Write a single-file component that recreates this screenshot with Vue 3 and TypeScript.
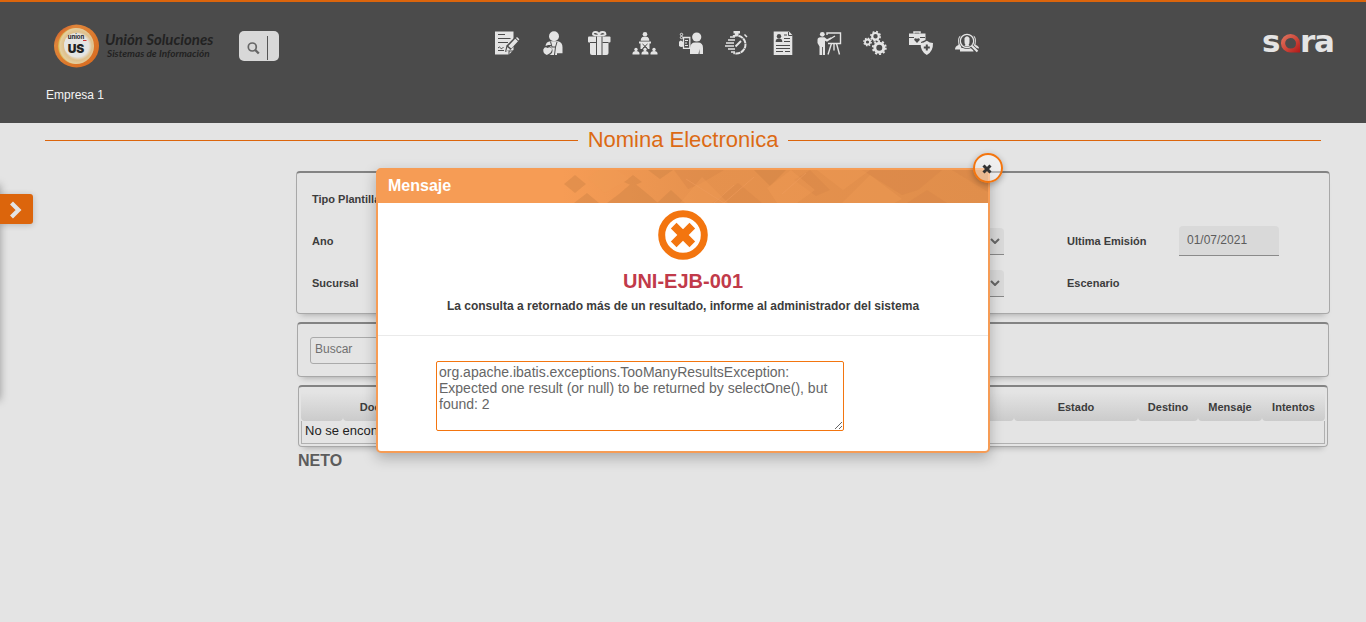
<script setup lang="ts">
import { ref } from 'vue'

interface Column {
  label: string
  width: string
}

const company = ref<string>('Empresa 1')
const issueDate = ref<string>('01/07/2021')
const search = ref<string>('')
const errorDetail = ref<string>(
  'org.apache.ibatis.exceptions.TooManyResultsException: Expected one result (or null) to be returned by selectOne(), but found: 2',
)

const columns: Column[] = [
  { label: '', width: '42px' },
  { label: 'Documento', width: '94px' },
  { label: '', width: 'auto' },
  { label: 'Estado', width: '124px' },
  { label: 'Destino', width: '60px' },
  { label: 'Mensaje', width: '64px' },
  { label: 'Intentos', width: '63px' },
]

const sideFigures: number[] = [3, 12, 21]
const watchLines: number[][] = [
  [5, 6, 10],
  [3, 9, 10],
  [1, 12, 9],
  [0, 15, 9],
  [3, 18, 10],
  [6, 21, 10],
]
</script>

<template>
  <div class="page">
    <header class="top">
      <div class="bar">
        <div class="start">
          <a href="#" class="brand">
            <svg class="emblem" viewBox="0 0 46 44" role="img" aria-label="Unión Soluciones">
              <defs>
                <linearGradient id="emblemRing" x1="0" y1="0" x2="1" y2="1">
                  <stop offset="0" stop-color="#c9461f" />
                  <stop offset=".25" stop-color="#e0863a" />
                  <stop offset="1" stop-color="#d8681c" />
                </linearGradient>
                <radialGradient id="emblemCore" cx=".55" cy=".5" r=".55">
                  <stop offset=".55" stop-color="#e6e4df" />
                  <stop offset=".72" stop-color="#dfc08c" />
                  <stop offset=".9" stop-color="#e3cfa0" />
                  <stop offset="1" stop-color="#d9b13a" />
                </radialGradient>
              </defs>
              <ellipse cx="22.5" cy="22" rx="22.5" ry="21.5" fill="url(#emblemRing)" />
              <circle cx="22" cy="22" r="18" fill="url(#emblemCore)" />
              <circle cx="22" cy="21" r="12" fill="#e5e5e3" />
              <text x="22" y="15" class="em-small">union</text>
              <path d="M29 16.500h3.500" stroke="#c33" stroke-width="1" />
              <text x="22" y="29" class="em-big">US</text>
            </svg>
            <span class="brand-text">
              <span class="brand-name">Unión Soluciones</span>
              <span class="brand-sub">Sistemas de Información</span>
            </span>
          </a>
          <button class="finder" type="button" aria-label="Buscar opción">
            <svg viewBox="0 0 40 30">
              <circle cx="13.300" cy="16" r="4" fill="none" stroke="#666" stroke-width="1.700" />
              <path d="M16.300 19l3.500 3.500" stroke="#666" stroke-width="2.400" />
              <path d="M28.500 5v24" stroke="#555" stroke-width="1" />
            </svg>
          </button>
        </div>

        <nav class="menu" aria-label="Módulos">
          <button type="button" aria-label="Contratos">
            <svg viewBox="0 0 24 24">
              <path class="f" d="M0 .5h18.500v18.500l-4.500 4.500H0z" />
              <path class="k" d="M3 3.500h7M3 7.500h12.500M3 11.500h10M3 17q1.500-2 2.500 0t3-1M3 19.500h6" />
              <path d="M10 21l1.500-6.500L20.500 5.500l4 3.500L16 18.500z" fill="#4b4b4b" />
              <path class="f" d="M11.200 20.200l1.200-4.200 2.800 2.600zM13.300 14.900L20.200 7.700l2.800 2.500-6.700 7.400z" />
              <path class="f" d="M21 7l1-1 2.400 2.200-1 1.200z" />
              <path class="k" d="M14 24v-4h5" />
            </svg>
          </button>
          <button type="button" aria-label="Empleados">
            <svg viewBox="0 0 24 24">
              <circle class="f" cx="13" cy="5.200" r="5" />
              <path class="f" d="M4.500 15q.5-4.500 5-4.800h7.500q4.500 1 4.500 6v6H16V24H7z" />
              <path class="k" d="M9.500 10.500l1.500 5.500 3.500 0 1.500-5M14.500 16l-1 8M6.500 14.500h4" />
              <circle cx="6.500" cy="19.500" r="5" fill="#4b4b4b" />
              <path class="f" d="M2.300 18.500q1.500-3.500 4.200-1.500 3-2 4.500.8 0 4.200-5.200 6.200-4-1.500-3.500-5.500z" />
            </svg>
          </button>
          <button type="button" aria-label="Beneficios">
            <svg viewBox="0 0 24 24">
              <path d="M12.200 4.500Q8 5 6 3.500 5.500 1 8.500 1t3.700 3.500Q12.500 1 15.500 1t3 2.500Q16 5 12.200 4.500" fill="none" stroke="#e4e4e4" stroke-width="1.800" />
              <rect class="f" x="1" y="5.500" width="22.500" height="6" rx="1" />
              <path class="f" d="M3 11h18.500V22q0 2-2 2H5q-2 0-2-2z" />
              <path class="k" d="M9.500 5.500V24M15 5.500V24M3 11.500h6M15.500 11.500h6" />
            </svg>
          </button>
          <button type="button" aria-label="Organización">
            <svg viewBox="0 0 24 24">
              <circle class="f" cx="12" cy="3.300" r="2.300" />
              <path class="f" d="M7.700 9.700q0-3.700 3-4h2.600q3 .3 3 4zM6 10.500h12v2h-1.500v5.500h-9v-5.500H6z" />
              <path class="k" d="M9.500 13l5 4.500M14.500 13l-5 4.500" />
              <circle cx="12" cy="18.500" r="2.600" fill="#4b4b4b" />
              <g v-for="x in sideFigures" :key="x">
                <circle class="f" :cx="x" cy="18.500" r="1.700" />
                <path class="f" :d="`M${x - 3.500} 23.500v-1a3.500 2.500 0 0 1 7 0v1z`" />
              </g>
            </svg>
          </button>
          <button type="button" aria-label="Autoservicio">
            <svg viewBox="0 0 24 24">
              <circle class="f" cx="17.700" cy="6" r="4.600" />
              <path class="f" d="M11 23V17q.5-5.500 5-5.500h3q5 0 5 5.500V23h-3.500v-5l-1 5z" />
              <path d="M4.500 6.500h6.300v10.800H4.500z" fill="none" stroke="#e4e4e4" stroke-width="1.300" />
              <path d="M6 9.500h3M6 12h2M6 14.500h3" stroke="#e4e4e4" stroke-width="1" />
              <path class="f" d="M0 11q1-2.500 3-1l2 2v3q-2.500 2-5 0z" />
              <circle cx="2.500" cy="3.500" r="1.200" fill="none" stroke="#e4e4e4" />
              <circle cx="2.500" cy="6.500" r="1.200" fill="none" stroke="#e4e4e4" />
            </svg>
          </button>
          <button type="button" aria-label="Tiempos">
            <svg viewBox="0 0 24 24">
              <path class="f" d="M8.500 0h6.500v2.500h-1.500v2H10v-2H8.500z" />
              <path d="M8 5.200A9 9 0 1 1 8.500 22" fill="none" stroke="#e4e4e4" stroke-width="2" stroke-dasharray="5 .5" />
              <path d="M19.500 3.500l2.500 2.500" stroke="#e4e4e4" stroke-width="1.500" />
              <path d="M10.500 15.500l5.500-5.500" stroke="#e4e4e4" stroke-width="1.900" />
              <path v-for="l in watchLines" :key="l[1]" :d="`M${l[0]} ${l[1]}H${l[2]}`" stroke="#e4e4e4" stroke-width="1.500" />
            </svg>
          </button>
          <button type="button" aria-label="Hoja de vida">
            <svg viewBox="0 0 24 24">
              <path class="f" d="M2.700.5H18l3.300 3.500v20H2.700z" />
              <circle cx="8" cy="5.200" r="2.200" fill="#4b4b4b" />
              <path d="M4.700 11v-.5a3.300 3 0 0 1 6.600 0v.5z" fill="#4b4b4b" />
              <path class="k" d="M13 4h3M13 7.500h6M13 10.500h6M5 14.500h14M5 17.500h14M5 20.500h7M14 20.500h5M17.500 1v3.500h4" />
            </svg>
          </button>
          <button type="button" aria-label="Capacitación">
            <svg viewBox="0 0 24 24">
              <circle class="f" cx="5.300" cy="3.300" r="2.400" />
              <path class="f" d="M.5 9q0-2.500 3-2.700h4l2.500 2 4-2 .5 1.500-4.500 3-2-1V24H5.900v-8h-.8v8H2.500v-8.500L.5 12z" />
              <path d="M10 4V2h13.500v10.500H11" fill="none" stroke="#e4e4e4" stroke-width="1.400" />
              <path d="M13 8l5-3M14.500 12.500L11 23.500M19.500 12.500l3 11M17 12.500v7" stroke="#e4e4e4" stroke-width="1.400" />
            </svg>
          </button>
          <button type="button" aria-label="Configuración">
            <svg viewBox="0 0 24 24" fill="none" stroke="#e4e4e4">
              <circle cx="12.500" cy="5.300" r="3.300" stroke-width="2.200" />
              <circle cx="12.500" cy="5.300" r="4.700" stroke-width="1.600" stroke-dasharray="1.850 1.850" />
              <circle cx="4.500" cy="11" r="2.500" stroke-width="1.800" />
              <circle cx="4.500" cy="11" r="3.700" stroke-width="1.400" stroke-dasharray="1.450 1.450" />
              <circle cx="16.300" cy="16.700" r="4.500" stroke-width="3" />
              <circle cx="16.300" cy="16.700" r="6.500" stroke-width="1.800" stroke-dasharray="2.040 2.040" />
            </svg>
          </button>
          <button type="button" aria-label="Salud y seguridad">
            <svg viewBox="0 0 24 24">
              <path d="M5 2.500V1h6v1.500" fill="none" stroke="#e4e4e4" stroke-width="1.500" />
              <path class="f" d="M0 2.500h16.500v6.500l-4.500 2v3H0z" />
              <path class="k" d="M0 6.500h5M11 6.500h5" />
              <path d="M8 12L5.200 9Q5 6.500 8 7.700q3-1.200 2.800 1.300z" fill="#4b4b4b" />
              <path class="f" d="M17.800 9.700q3 2.300 6.200 2.300.3 8.500-6.200 12-6.500-3.500-6.200-12 3.200 0 6.200-2.300z" />
              <path d="M17.800 13.500v6M14.800 16.500h6" stroke="#4b4b4b" stroke-width="2" />
            </svg>
          </button>
          <button type="button" aria-label="Selección">
            <svg viewBox="0 0 24 24">
              <path class="f" d="M0 18.500q0-3.500 3.500-4.500-1.500-8 2-9.500l1 14zM24 17.500q0-2.500-3.500-3.500 1.500-8-2-9.500l-1 12zM5 17h13.500v3.500H5z" />
              <circle cx="12" cy="10" r="8" fill="#4b4b4b" />
              <circle cx="12" cy="10" r="6.700" fill="none" stroke="#e4e4e4" stroke-width="1.300" />
              <path class="f" d="M9.500 7q2.500-3.500 5 0v4q0 2-1 3l1.200.8q-2.700 1.500-5.400 0l1.200-.8q-1-1-1-3z" />
              <path d="M16.500 15l6.500 6" stroke="#4b4b4b" stroke-width="4" />
              <path d="M16.500 14.500l6 6" stroke="#e4e4e4" stroke-width="2.200" />
            </svg>
          </button>
        </nav>

        <a href="#" class="product">
          <svg viewBox="0 0 76 46" role="img" aria-label="sara">
            <defs>
              <linearGradient id="drop" x1="0" y1="0" x2="1" y2="1">
                <stop offset="0" stop-color="#e07a64" />
                <stop offset=".5" stop-color="#cf4a3c" />
                <stop offset="1" stop-color="#b01818" />
              </linearGradient>
            </defs>
            <text x="0" y="32" class="word">s</text>
            <path fill="url(#drop)" fill-rule="evenodd" d="M28.500 14a9.500 9.200 0 0 1 9.500 9.200v9.300h-9.500a9.500 9.200 0 0 1 0-18.500zM28.500 18a5.300 5.200 0 0 0 0 10.500q5.500 0 5.500-5.300a5.300 5.200 0 0 0-5.500-5.200z" />
            <text x="38" y="32" class="word">r</text>
            <text x="52" y="32" class="word">a</text>
          </svg>
        </a>
      </div>
      <div class="company">{{ company }}</div>
    </header>

    <h1 class="title">Nomina Electronica</h1>

    <main class="content">
      <form class="card filters" @submit.prevent>
        <label for="template">Tipo Plantilla</label>
        <span class="pick short"><select id="template"><option></option></select></span>
        <span></span>
        <span></span>

        <label for="year">Ano</label>
        <span class="pick">
          <select id="year"><option></option></select>
          <svg viewBox="0 0 10 6"><path d="M1 1l4 4 4-4" /></svg>
        </span>
        <label for="issued">Ultima Emisión</label>
        <input id="issued" v-model="issueDate" class="date" type="text" />

        <label for="branch">Sucursal</label>
        <span class="pick">
          <select id="branch"><option></option></select>
          <svg viewBox="0 0 10 6"><path d="M1 1l4 4 4-4" /></svg>
        </span>
        <span class="caption">Escenario</span>
        <span></span>
      </form>

      <div class="card searcher">
        <input v-model="search" type="text" placeholder="Buscar" aria-label="Buscar" />
      </div>

      <div class="card grid">
        <table>
          <colgroup>
            <col v-for="(c, i) in columns" :key="i" :style="{ width: c.width }" />
          </colgroup>
          <thead>
            <tr>
              <th v-for="(c, i) in columns" :key="i" scope="col">{{ c.label }}</th>
            </tr>
          </thead>
          <tbody>
            <tr>
              <td :colspan="columns.length">No se encontraron registros</td>
            </tr>
          </tbody>
        </table>
      </div>
      <h2 class="net">NETO</h2>
    </main>

    <div class="drawer"></div>
    <button class="tab" type="button" aria-label="Abrir panel">
      <svg viewBox="0 0 14 18"><path d="M2.500 2l7 7-7 7" /></svg>
    </button>

    <section class="dialog" role="dialog" aria-labelledby="dialog-title">
      <header class="dialog-head">
        <svg class="pattern" viewBox="0 0 426 33" preserveAspectRatio="xMaxYMid slice" aria-hidden="true">
          <defs>
            <linearGradient id="fade" x1="0" y1="0" x2="1" y2="0">
              <stop offset="0" stop-color="#de8d4b" stop-opacity="0" />
              <stop offset=".35" stop-color="#e08e4b" stop-opacity=".75" />
              <stop offset="1" stop-color="#e08e4b" />
            </linearGradient>
          </defs>
          <rect width="426" height="33" fill="url(#fade)" />
          <g fill="#cf8244" fill-opacity=".45">
            <path d="M2 14l11-9 11 9-11 9zM12 33l13-10 12 10z" />
            <path d="M45 33l12-9 14-12 16 13 9 8zM62 12l9-7 9 7-9 4zM86 0h25l-13 9z" />
            <path d="M95 33l14-13 14 13zM192 0h32l-16 16z" />
          </g>
          <g fill="#cf8244" fill-opacity=".3">
            <path d="M112 0h50l-24 14-12 5zM300 0h80l-24 20-16 5zM345 33l20-13 20 13zM390 0h36v22z" />
            <path d="M150 33l26-20 24 20zM232 10l16-10 20 20-14 6z" />
          </g>
          <g fill="#f19a55" fill-opacity=".4">
            <path d="M25 8l12-8h18l12 9-24 14zM118 33l22-26 26 26zM205 18l24-18 24 20-18 13h-20z" />
            <path d="M255 0l26 20 27-20zM280 33l28-28 32 24-8 4z" />
          </g>
          <path d="M124 9l38 24 30-26M152 33l20-18M244 3l-24 21" fill="none" stroke="#ef9b5b" stroke-opacity=".6" />
        </svg>
        <h2 id="dialog-title">Mensaje</h2>
      </header>
      <div class="dialog-main">
        <svg class="fail" viewBox="0 0 50 50" aria-hidden="true">
          <circle cx="25" cy="25" r="21.300" />
          <path d="M15.700 15.700l18.600 18.600M34.300 15.700L15.700 34.300" />
        </svg>
        <h3>UNI-EJB-001</h3>
        <p>La consulta a retornado más de un resultado, informe al administrador del sistema</p>
      </div>
      <div class="dialog-detail">
        <textarea v-model="errorDetail" aria-label="Detalle del error" spellcheck="false"></textarea>
      </div>
      <button class="close" type="button" aria-label="Cerrar">
        <svg viewBox="0 0 10 10"><path d="M1.500 1.500l7 7M8.500 1.500l-7 7" /></svg>
      </button>
    </section>
  </div>
</template>

<style>
body {
  margin: 0;
  background: #e4e4e4;
}
</style>

<style scoped>
.page {
  position: relative;
  min-height: 100vh;
  overflow: hidden;
  box-sizing: border-box;
  background: #e4e4e4;
  color: #3c3c3c;
  font-family: "Liberation Sans", Arial, sans-serif;
}
.page *,
.page *::before,
.page *::after {
  box-sizing: border-box;
}
button {
  margin: 0;
  padding: 0;
  border: 0;
  background: none;
  cursor: pointer;
}
svg {
  display: block;
}

.top {
  border-top: 2px solid #dc650c;
  background: #4b4b4b;
  height: 123px;
}
.bar {
  display: flex;
  align-items: center;
  height: 82px;
  padding: 0 28px 0 54px;
}
.start {
  display: flex;
  align-items: center;
  flex: 0 0 430px;
  padding-top: 5px;
}
.brand {
  display: flex;
  align-items: center;
  gap: 5px;
  width: 185px;
  color: #222;
  text-decoration: none;
}
.emblem {
  width: 46px;
  height: 44px;
  flex: none;
}
.em-small {
  font: bold 6px "Inter", sans-serif;
  fill: #222;
  text-anchor: middle;
}
.em-big {
  font: 900 12px "Inter", sans-serif;
  fill: #222;
  text-anchor: middle;
}
.brand-text {
  display: flex;
  flex-direction: column;
  font-family: "Lato", sans-serif;
  font-style: italic;
  font-weight: 700;
  white-space: nowrap;
}
.brand-name {
  font-size: 15px;
  line-height: 15px;
}
.brand-sub {
  padding-left: 2px;
  font-size: 10px;
  line-height: 12px;
}
.finder {
  width: 40px;
  height: 30px;
  border-radius: 5px;
  background: #d8d8d8;
}
.menu {
  display: flex;
}
.menu button {
  width: 46px;
  height: 46px;
  display: grid;
  place-items: center;
}
.menu svg {
  width: 24px;
  height: 24px;
  overflow: visible;
}
.f {
  fill: #e4e4e4;
}
.k {
  fill: none;
  stroke: #4b4b4b;
  stroke-width: 1;
}
.product {
  margin-left: auto;
}
.product svg {
  width: 76px;
  height: 46px;
}
.word {
  font: bold 31px "DejaVu Sans", sans-serif;
  fill: #e4e4e4;
}
.company {
  padding: 3px 46px;
  color: #f4f4f4;
  font-size: 12px;
  line-height: 16px;
}

.title {
  display: flex;
  align-items: flex-start;
  gap: 10px;
  margin: 4px 45px 0;
  color: #dc6a14;
  font-size: 22px;
  font-weight: 400;
  line-height: 26px;
}
.title::before,
.title::after {
  content: "";
  flex: 1;
  margin-top: 13px;
  border-top: 1px solid #dc650c;
}

.content {
  display: flex;
  flex-direction: column;
  gap: 8px;
  margin: 18px 36px 0 296px;
}
.card {
  border: 1px solid #a8a8a8;
  border-top: 2px solid #838383;
  border-radius: 4px;
  box-shadow: 0 6px 6px -5px rgba(0, 0, 0, 0.25);
}
.filters {
  display: grid;
  grid-template-columns: 128px 1fr 112px 136px;
  grid-auto-rows: 42px;
  align-items: center;
  padding: 5px 14px 9px 15px;
  font-size: 11px;
  font-weight: 700;
}
.pick {
  position: relative;
  display: block;
  margin-right: 63px;
}
.pick.short {
  width: 200px;
}
.pick select {
  display: block;
  width: 100%;
  height: 27px;
  border: 0;
  border-bottom: 1px solid #888;
  border-radius: 4px 4px 0 0;
  background: #d9d9d9;
  appearance: none;
}
.pick svg {
  position: absolute;
  right: 4px;
  top: 10px;
  width: 10px;
  height: 6px;
  pointer-events: none;
}
.pick path {
  fill: none;
  stroke: #666;
  stroke-width: 2;
}
.date {
  width: 100px;
  height: 30px;
  padding: 0 8px 2px;
  border: 0;
  border-bottom: 1px solid #8a8a8a;
  border-radius: 4px 4px 0 0;
  background: #d9d9d9;
  color: #5c5c5c;
  font: 12px "Liberation Sans", Arial, sans-serif;
}
.searcher {
  margin: 0 1px;
  padding: 13px 12px 12px;
}
.searcher input {
  display: block;
  width: 300px;
  height: 27px;
  padding: 0 4px 3px;
  border: 1px solid #aaa;
  border-radius: 3px;
  background: transparent;
  font: 12px "Liberation Sans", Arial, sans-serif;
}
.searcher input::placeholder {
  color: #707070;
}
.grid {
  margin: 0 2px;
  padding: 5px 2px 2px;
}
table {
  width: 100%;
  table-layout: fixed;
  border-collapse: separate;
  border-spacing: 0;
}
th {
  height: 29px;
  padding: 1px 0 0;
  border-radius: 0 0 4px 4px;
  background: linear-gradient(#e4e4e4, #cbcbcb);
  font-size: 11px;
  font-weight: 700;
  line-height: 16px;
}
td {
  height: 23px;
  padding: 0 3px 2px;
  border: 1px solid #b0b0b0;
  border-top: 0;
  color: #222;
  font-size: 13px;
  line-height: 16px;
}
.net {
  margin: -3px 2px 0;
  color: #5c5c5c;
  font-size: 16px;
  line-height: 18px;
}

.drawer {
  position: absolute;
  left: -20px;
  top: 185px;
  width: 20px;
  height: 215px;
  box-shadow: 0 0 8px rgba(0, 0, 0, 0.35);
}
.tab {
  position: absolute;
  left: 0;
  top: 194px;
  width: 33px;
  height: 30px;
  padding: 2px 0 0 9px;
  border-radius: 0 3px 3px 0;
  background: #dc650c;
  box-shadow: 0 1px 6px rgba(0, 0, 0, 0.2);
}
.tab svg {
  width: 14px;
  height: 18px;
}
.tab path {
  fill: none;
  stroke: #e4e4e4;
  stroke-width: 4.200;
}

.dialog {
  position: absolute;
  left: 50%;
  top: 168px;
  width: 614px;
  transform: translateX(-50%);
  border: 2px solid #f69c55;
  border-radius: 5px;
  background: #fff;
  box-shadow: 0 5px 14px rgba(0, 0, 0, 0.25);
}
.dialog-head {
  position: relative;
  height: 33px;
  background: #f69c55;
}
.pattern {
  position: absolute;
  right: 0;
  top: 0;
  width: 426px;
  height: 33px;
}
.dialog-head h2 {
  position: relative;
  margin: 0;
  padding-left: 10px;
  color: #fff;
  font-size: 16px;
  line-height: 31px;
}
.dialog-main {
  display: flex;
  flex-direction: column;
  align-items: center;
  height: 133px;
  padding-top: 7px;
  border-bottom: 1px solid #eaeaea;
}
.fail {
  width: 50px;
  height: 50px;
  fill: none;
  stroke: #f3750f;
  stroke-width: 7;
}
.fail path {
  stroke-width: 8;
}
.dialog-main h3 {
  margin: 9px 0 0;
  color: #c13a4a;
  font-size: 20px;
  line-height: 24px;
}
.dialog-main p {
  margin: 5px 0 0;
  font-size: 12px;
  font-weight: 700;
  line-height: 16px;
}
.dialog-detail {
  padding: 25px 58px 20px;
}
textarea {
  display: block;
  width: 408px;
  height: 70px;
  padding: 2px;
  border: 1px solid #f3750f;
  border-radius: 2px;
  background: #fff;
  color: #666;
  font: 14px/16px "Liberation Sans", Arial, sans-serif;
  resize: both;
}
.close {
  position: absolute;
  right: -15px;
  top: -17px;
  display: grid;
  place-items: center;
  width: 30px;
  height: 30px;
  padding: 2px 2px 0 0;
  border: 2px solid #f3750f;
  border-radius: 50%;
  background: rgba(255, 255, 255, 0.4);
  box-shadow: 0 2px 6px rgba(0, 0, 0, 0.3);
}
.close svg {
  width: 10px;
  height: 10px;
}
.close path {
  stroke: #333;
  stroke-width: 3;
}
</style>
